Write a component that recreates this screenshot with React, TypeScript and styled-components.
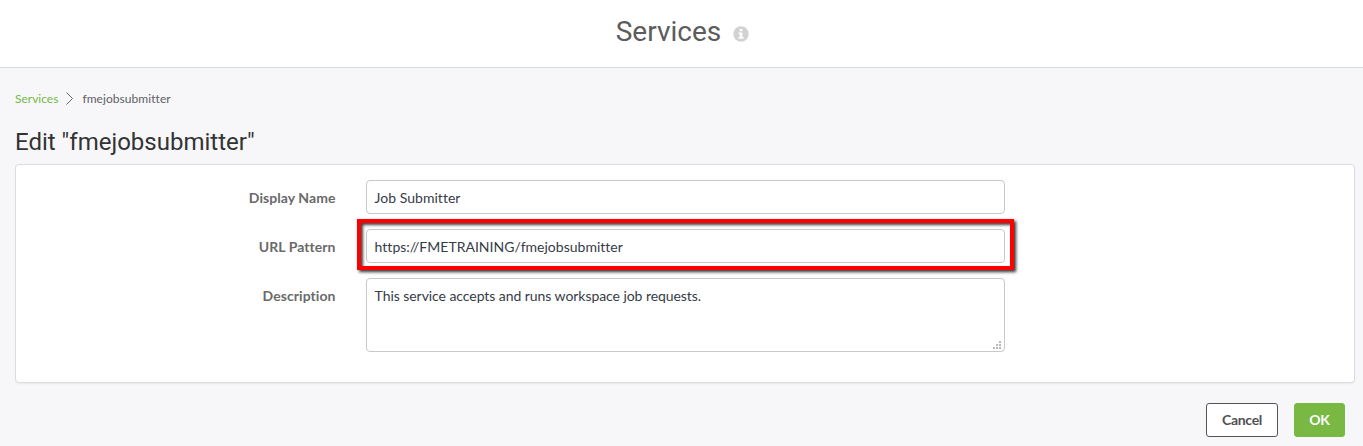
import React from 'react';
import styled, { createGlobalStyle } from 'styled-components';

const Global = createGlobalStyle`
  *, *::before, *::after { box-sizing: border-box; }
  body { margin: 0; background: #f7f7fa; font-family: Lato, "Open Sans", sans-serif; font-size: 14px; line-height: 20px; color: #363b47; }
`;
const Page = styled.div`height: 446px; display: flex; flex-direction: column; overflow: hidden;`;
const Header = styled.header`
  height: 68px; flex: none; background: #fff; border-bottom: 1px solid #d5dce3;
  display: flex; justify-content: center; padding: 12px 0 0 2px;
`;
const Title = styled.h1`margin: 0; font: 400 28px/40px Roboto, sans-serif; color: #5c5c5c;`;
const InfoIcon = styled.svg`width: 16px; height: 16px; margin: 14px 0 0 12px;`;
const Crumbs = styled.nav`display: flex; align-items: center; padding: 21px 15px 0; height: 41px; font-size: 12px; color: #606060;`;
const CrumbLink = styled.a`color: #74b843;`;
const Chevron = styled.svg`width: 9px; height: 13px; margin: -2px 8px 0 7px;`;
const CrumbCurrent = styled.span`letter-spacing: 0.06px;`;
const Heading = styled.h2`margin: 17px 0 0 15px; font: 400 24px/32px Roboto, sans-serif; color: #333;`;
const Panel = styled.form`
  height: 219px; flex: none; margin: 6px 8px 0 15px; padding-top: 15px; background: #fff;
  border: 1px solid #dcdce0; border-radius: 4px; box-shadow: 0 1px 2px rgba(0,0,0,.06);
  display: flex; flex-direction: column; gap: 15px;
`;
const Row = styled.div`display: flex;`;
const Label = styled.label`width: 319.5px; text-align: right; font-weight: 700; color: #6a6a6a; line-height: 36px; height: 34px; margin-right: 30.5px; letter-spacing: 0.06px;`;
const Field = styled.div<{ $tall?: boolean; $tracking?: number }>`
  position: relative; width: 639px; height: ${p => (p.$tall ? 74 : 34)}px; padding: 7px 7.6px;
  border: 1px solid #c8c8c8; border-radius: 4px; background: #fff;
  letter-spacing: ${p => p.$tracking ?? 0}px;
`;
const Highlight = styled.div`
  position: absolute; left: -10px; top: -11px; width: 657px; height: 51px;
  border: 4px solid #f00; box-shadow: 2px 2px 3px rgba(0,0,0,.8), inset 2px 2px 3px rgba(0,0,0,.75);
`;
const Grip = styled.svg`position: absolute; right: 2px; bottom: 1px; width: 9px; height: 9px;`;
const Actions = styled.div`display: flex; justify-content: flex-end; gap: 16px; padding: 20px 18px 0 0;`;
const Button = styled.button<{ $primary?: boolean }>`
  height: 34px; width: ${p => (p.$primary ? 51 : 72)}px; padding: 0; border-radius: 3px;
  border: 1px solid ${p => (p.$primary ? '#78b843' : '#555')};
  background: ${p => (p.$primary ? '#78b843' : '#fff')}; color: ${p => (p.$primary ? '#fff' : '#505050')};
  font: 700 14px/20px Lato, sans-serif; letter-spacing: -0.3px;
`;

export default function App() {
  return (
    <Page>
      <Global />
      <Header>
        <Title>Services</Title>
        <InfoIcon viewBox="0 0 16 16">
          <circle cx="8" cy="8" r="7.7" fill="#d2d2d2" />
          <path d="M6.7 3h2.7v2.3H6.7zM5.5 6.5h3.9v4.5h1.1v1.8h-5V11h1.2V8.2H5.5z" fill="#fff" />
        </InfoIcon>
      </Header>
      <Crumbs>
        <CrumbLink>Services</CrumbLink>
        <Chevron viewBox="0 0 9 13"><path d="M1.5 .5 7.5 6.5 1.5 12.5" fill="none" stroke="#666" /></Chevron>
        <CrumbCurrent>fmejobsubmitter</CrumbCurrent>
      </Crumbs>
      <Heading>Edit "fmejobsubmitter"</Heading>
      <Panel>
        <Row><Label>Display Name</Label><Field $tracking={0.03}>Job Submitter</Field></Row>
        <Row><Label>URL Pattern</Label><Field $tracking={0.01}>https://FMETRAINING/fmejobsubmitter<Highlight /></Field></Row>
        <Row>
          <Label>Description</Label>
          <Field $tall $tracking={-0.06}>
            This service accepts and runs workspace job requests.
            <Grip viewBox="0 0 9 9"><path d="M6 0h2v2H6zM3 3h2v2H3zM6 3h2v2H6zM0 6h2v2H0zM3 6h2v2H3zM6 6h2v2H6z" fill="#b8b8b8" /></Grip>
          </Field>
        </Row>
      </Panel>
      <Actions>
        <Button type="button">Cancel</Button>
        <Button type="button" $primary>OK</Button>
      </Actions>
    </Page>
  );
}
